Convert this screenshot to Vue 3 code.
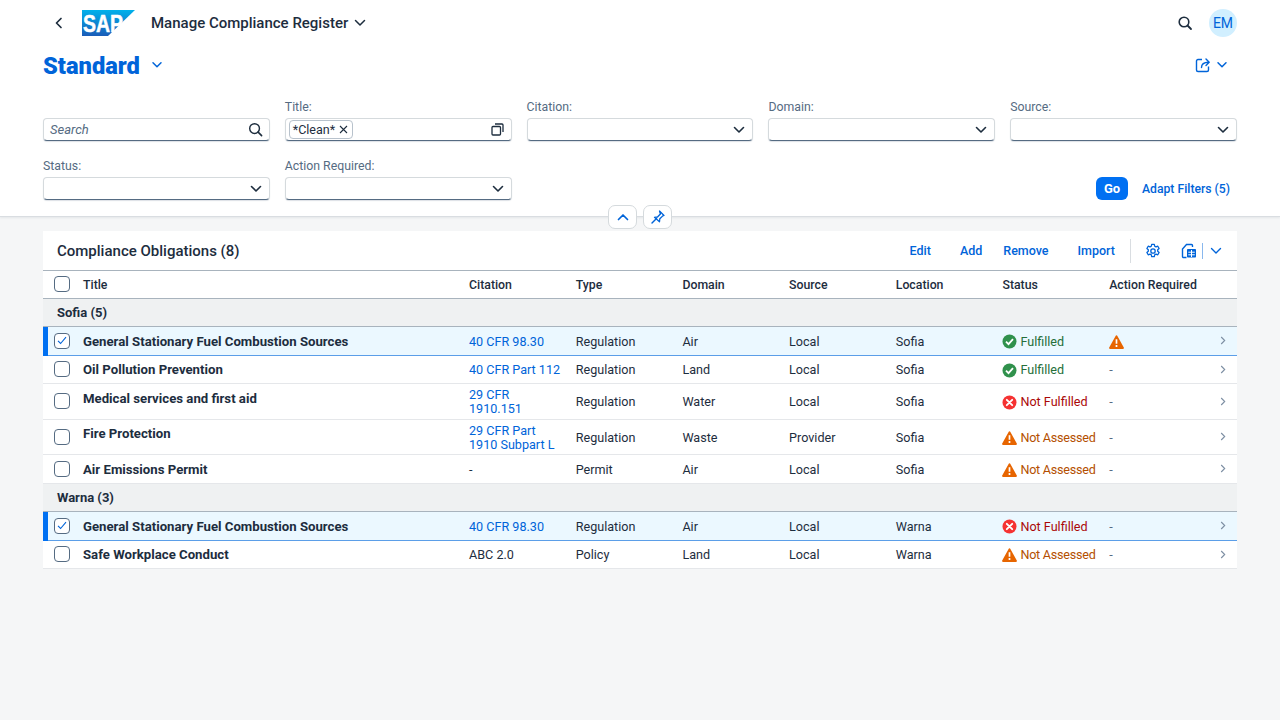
<script setup>
const filters1 = [
  { label: 'Citation:' },
  { label: 'Domain:' },
  { label: 'Source:' },
]
const filters2 = [{ label: 'Status:' }, { label: 'Action Required:' }]
const columns = ['Citation', 'Type', 'Domain', 'Source', 'Location', 'Status', 'Action Required']
const groups = [
  {
    name: 'Sofia (5)',
    rows: [
      { title: 'General Stationary Fuel Combustion Sources', citation: ['40 CFR 98.30'], link: true, type: 'Regulation', domain: 'Air', source: 'Local', location: 'Sofia', status: 'ok', action: 'warn', selected: true },
      { title: 'Oil Pollution Prevention', citation: ['40 CFR Part 112'], link: true, type: 'Regulation', domain: 'Land', source: 'Local', location: 'Sofia', status: 'ok', action: '-' },
      { title: 'Medical services and first aid', citation: ['29 CFR', '1910.151'], link: true, type: 'Regulation', domain: 'Water', source: 'Local', location: 'Sofia', status: 'bad', action: '-' },
      { title: 'Fire Protection', citation: ['29 CFR Part', '1910 Subpart L'], link: true, type: 'Regulation', domain: 'Waste', source: 'Provider', location: 'Sofia', status: 'warn', action: '-' },
      { title: 'Air Emissions Permit', citation: ['-'], type: 'Permit', domain: 'Air', source: 'Local', location: 'Sofia', status: 'warn', action: '-' },
    ],
  },
  {
    name: 'Warna (3)',
    rows: [
      { title: 'General Stationary Fuel Combustion Sources', citation: ['40 CFR 98.30'], link: true, type: 'Regulation', domain: 'Air', source: 'Local', location: 'Warna', status: 'bad', action: '-', selected: true },
      { title: 'Safe Workplace Conduct', citation: ['ABC 2.0'], type: 'Policy', domain: 'Land', source: 'Local', location: 'Warna', status: 'warn', action: '-' },
    ],
  },
]
const statusText = { ok: 'Fulfilled', bad: 'Not Fulfilled', warn: 'Not Assessed' }
</script>

<template>
  <div class="page">
    <header class="head">
      <div class="shell">
        <svg class="back" width="10" height="12" viewBox="0 0 10 12"><path d="M7 1.500 2.500 6 7 10.500" fill="none" stroke="#1d2d3e" stroke-width="1.700" stroke-linecap="round" stroke-linejoin="round"/></svg>
        <svg class="logo" width="53" height="26" viewBox="0 0 53 26">
          <defs><linearGradient id="sapg" x1="0" y1="0" x2="0" y2="1"><stop offset="0" stop-color="#00b1eb"/><stop offset="1" stop-color="#1a5cb8"/></linearGradient></defs>
          <polygon points="0,0 53,0 26,26 0,26" fill="url(#sapg)"/>
          <text x="1" y="22" class="logo-text" textLength="40" lengthAdjust="spacingAndGlyphs">SAP</text>
        </svg>
        <span class="app-title">Manage Compliance Register</span>
        <svg class="app-chev" width="12" height="8" viewBox="0 0 12 8"><path d="M1.500 1.500 6 6l4.500-4.500" fill="none" stroke="#1d2d3e" stroke-width="1.500" stroke-linecap="round" stroke-linejoin="round"/></svg>
        <span class="grow"></span>
        <svg width="16" height="16" viewBox="0 0 16 16"><circle cx="7" cy="7" r="4.800" fill="none" stroke="#1d2d3e" stroke-width="1.600"/><path d="m10.500 10.500 3.500 3.500" stroke="#1d2d3e" stroke-width="1.800" stroke-linecap="round"/></svg>
        <span class="avatar">EM</span>
      </div>
      <div class="variant">
        <h1>Standard</h1>
        <svg width="12" height="8" viewBox="0 0 12 8"><path d="M2 1.800 6 5.800l4-4" fill="none" stroke="#0064d9" stroke-width="1.500" stroke-linecap="round" stroke-linejoin="round"/></svg>
        <span class="grow"></span>
        <svg width="16" height="16" viewBox="0 0 16 16"><path d="M7 2.500H3a1.500 1.500 0 0 0-1.500 1.500v9A1.500 1.500 0 0 0 3 14.500h9a1.500 1.500 0 0 0 1.500-1.500V9.500" fill="none" stroke="#0064d9" stroke-width="1.400"/><path d="M6.500 10.500c0-3.500 2.500-5.300 7-5.300M11 2l3.200 3.200L11 8.400" fill="none" stroke="#0064d9" stroke-width="1.400" stroke-linecap="round" stroke-linejoin="round"/></svg>
        <svg class="share-chev" width="12" height="8" viewBox="0 0 12 8"><path d="M2 1.800 6 5.800l4-4" fill="none" stroke="#0064d9" stroke-width="1.500" stroke-linecap="round" stroke-linejoin="round"/></svg>
      </div>
      <div class="filters">
        <div class="field">
          <span class="label"></span>
          <div class="input">
            <span class="placeholder">Search</span>
            <svg width="15" height="15" viewBox="0 0 16 16"><circle cx="7" cy="7" r="5.200" fill="none" stroke="#1d2d3e" stroke-width="1.500"/><path d="m10.800 10.800 3.700 3.700" stroke="#1d2d3e" stroke-width="1.700" stroke-linecap="round"/></svg>
          </div>
        </div>
        <div class="field">
          <span class="label">Title:</span>
          <div class="input token-input">
            <span class="token">*Clean*
              <svg width="9" height="9" viewBox="0 0 9 9"><path d="m1 1 7 7M8 1 1 8" stroke="#1d2d3e" stroke-width="1.100"/></svg>
            </span>
            <svg width="13" height="13" viewBox="0 0 13 13"><rect x="1" y="3.500" width="8.500" height="8.500" rx="1" fill="none" stroke="#1d2d3e" stroke-width="1.300"/><path d="M4 1h7a1 1 0 0 1 1 1v7" fill="none" stroke="#1d2d3e" stroke-width="1.300"/></svg>
          </div>
        </div>
        <div v-for="f in filters1" :key="f.label" class="field">
          <span class="label">{{ f.label }}</span>
          <div class="input select">
            <svg width="12" height="8" viewBox="0 0 12 8"><path d="M1.500 1.500 6 6l4.500-4.500" fill="none" stroke="#1d2d3e" stroke-width="1.600" stroke-linecap="round" stroke-linejoin="round"/></svg>
          </div>
        </div>
        <div v-for="f in filters2" :key="f.label" class="field">
          <span class="label">{{ f.label }}</span>
          <div class="input select">
            <svg width="12" height="8" viewBox="0 0 12 8"><path d="M1.500 1.500 6 6l4.500-4.500" fill="none" stroke="#1d2d3e" stroke-width="1.600" stroke-linecap="round" stroke-linejoin="round"/></svg>
          </div>
        </div>
        <div class="actions">
          <button class="go">Go</button>
          <button class="adapt">Adapt Filters (5)</button>
        </div>
      </div>
      <div class="collapse">
        <button class="round"><svg width="12" height="8" viewBox="0 0 12 8"><path d="M1.500 6.500 6 2l4.500 4.500" fill="none" stroke="#0064d9" stroke-width="1.700" stroke-linecap="round" stroke-linejoin="round"/></svg></button>
        <button class="round"><svg width="14" height="14" viewBox="0 0 14 14"><path d="M8.500 1 13 5.500l-1.200.4-3 2.900-.3 3L3.500 7.300l3-.3 2.900-3z" fill="none" stroke="#0064d9" stroke-width="1.300" stroke-linejoin="round"/><path d="M5.500 8.500 1 13" stroke="#0064d9" stroke-width="1.400" stroke-linecap="round"/></svg></button>
      </div>
    </header>

    <main class="content">
      <section class="card">
        <div class="toolbar">
          <h2>Compliance Obligations (8)</h2>
          <span class="grow"></span>
          <button class="tb edit">Edit</button>
          <button class="tb add">Add</button>
          <button class="tb remove">Remove</button>
          <button class="tb import">Import</button>
          <span class="sep"></span>
          <svg class="gear" width="16" height="16" viewBox="0 0 16 16"><circle cx="8" cy="8" r="2.200" fill="none" stroke="#0064d9" stroke-width="1.300"/><path d="M6.700 1.300h2.600l.4 1.900 1.300.7 1.800-.7 1.300 2.300-1.400 1.300v1.400l1.400 1.300-1.300 2.300-1.800-.7-1.300.7-.4 1.900H6.700l-.4-1.900-1.300-.7-1.800.7-1.300-2.300 1.400-1.300V6.800L1.900 5.500l1.300-2.300 1.800.7 1.300-.7z" fill="none" stroke="#0064d9" stroke-width="1.300" stroke-linejoin="round"/></svg>
          <svg class="export" width="16" height="16" viewBox="0 0 16 16"><path d="M5.500 14.500h-3a1 1 0 0 1-1-1V6l4-4.500h5a1 1 0 0 1 1 1V4" fill="none" stroke="#0064d9" stroke-width="1.400"/><rect x="6" y="6" width="9" height="8.500" rx=".8" fill="#0064d9"/><path d="M7.300 9.200h6.500M7.300 11.800h6.500M10.500 7v7" stroke="#fff" stroke-width="1"/></svg>
          <span class="sep small"></span>
          <svg class="tb-chev" width="12" height="8" viewBox="0 0 12 8"><path d="M1.500 1.500 6 6l4.500-4.500" fill="none" stroke="#0064d9" stroke-width="1.400" stroke-linecap="round" stroke-linejoin="round"/></svg>
        </div>
        <div class="row head-row">
          <div class="check-cell"><span class="check"></span></div>
          <div class="cell th">Title</div>
          <div v-for="c in columns" :key="c" class="cell th">{{ c }}</div>
        </div>
        <template v-for="g in groups" :key="g.name">
          <div class="group">{{ g.name }}</div>
          <div v-for="(r, i) in g.rows" :key="i" class="row" :class="{ selected: r.selected }">
            <div class="check-cell">
              <span class="check">
                <svg v-if="r.selected" width="10" height="9" viewBox="0 0 10 9"><path d="M1 4.800 3.600 7.500 9 1.200" fill="none" stroke="#0064d9" stroke-width="1.100"/></svg>
              </span>
            </div>
            <div class="cell title">{{ r.title }}</div>
            <div class="cell" :class="{ link: r.link }">
              <div v-for="l in r.citation" :key="l">{{ l }}</div>
            </div>
            <div class="cell">{{ r.type }}</div>
            <div class="cell">{{ r.domain }}</div>
            <div class="cell">{{ r.source }}</div>
            <div class="cell">{{ r.location }}</div>
            <div class="cell status" :class="r.status">
              <svg v-if="r.status === 'ok'" width="15" height="15" viewBox="0 0 15 15"><circle cx="7.500" cy="7.500" r="7" fill="#30914c"/><path d="m4 7.700 2.500 2.500L11 5.200" fill="none" stroke="#fff" stroke-width="1.800"/></svg>
              <svg v-else-if="r.status === 'bad'" width="15" height="15" viewBox="0 0 15 15"><circle cx="7.500" cy="7.500" r="7" fill="#f53232"/><path d="m4.800 4.800 5.400 5.400m0-5.400-5.400 5.400" stroke="#fff" stroke-width="1.900" stroke-linecap="round"/></svg>
              <svg v-else width="15" height="14" viewBox="0 0 15 14"><path d="M6.600.9a1 1 0 0 1 1.800 0l6.400 11.500a1 1 0 0 1-.9 1.500H1.100a1 1 0 0 1-.9-1.500z" fill="#e76500"/><path d="M7.500 4.200v4.600M7.500 10.100v1.800" stroke="#fff" stroke-width="1.700"/></svg>
              <span>{{ statusText[r.status] }}</span>
            </div>
            <div class="cell action">
              <svg v-if="r.action === 'warn'" width="15" height="14" viewBox="0 0 15 14"><path d="M6.600.9a1 1 0 0 1 1.800 0l6.400 11.500a1 1 0 0 1-.9 1.500H1.100a1 1 0 0 1-.9-1.500z" fill="#e76500"/><path d="M7.500 4.200v4.600M7.500 10.100v1.800" stroke="#fff" stroke-width="1.700"/></svg>
              <span v-else>-</span>
            </div>
            <div class="nav">
              <svg width="6" height="9" viewBox="0 0 6 9"><path d="m1.200 1 3.500 3.500L1.200 8" fill="none" stroke="#7d8fa3" stroke-width="1.100"/></svg>
            </div>
          </div>
        </template>
      </section>
    </main>
  </div>
</template>

<style>
html, body { margin: 0; background: #f5f6f7; }
</style>

<style scoped>
.page { width: 1280px; height: 720px; overflow: hidden; background: #f5f6f7; font-family: Roboto, "Liberation Sans", sans-serif; font-size: 12.600px; color: #1d2d3e; }
button { font: inherit; border: 0; background: none; padding: 0; }
h1, h2 { margin: 0; }
.grow { flex: 1; }
.head { position: relative; height: 217px; box-sizing: border-box; background: #fff; border-bottom: 1px solid #d9dde1; box-shadow: 0 1px 2px rgba(29,45,62,.08); }
.shell { display: flex; align-items: center; height: 46px; padding: 0 43px 0 54px; }
.back { margin-right: 18px; }
.logo { flex-shrink: 0; }
.logo-text { font: 700 23px "Liberation Sans", sans-serif; fill: #fff; stroke: #fff; stroke-width: .5px; }
.app-title { margin-left: 16px; font-size: 15px; font-weight: 500; }
.app-chev { margin-left: 6px; }
.avatar { display: flex; align-items: center; justify-content: center; width: 28px; height: 28px; margin-left: 16px; border-radius: 50%; background: #d1efff; color: #0064d9; font-size: 14px; }
.variant { display: flex; align-items: center; height: 38px; padding: 0 52px 0 43px; }
.variant h1 { font-size: 23.700px; line-height: 35px; padding-top: 3px; font-weight: 900; color: #0064d9; margin-right: 11px; }
.share-chev { margin-left: 5px; }
.filters { display: grid; grid-template-columns: repeat(5, 1fr); column-gap: 15px; row-gap: 17px; padding: 15px 43px 0; }
.field { display: flex; flex-direction: column; }
.label { height: 16px; line-height: 16px; margin-bottom: 3px; font-size: 12.300px; color: #556b82; }
.input { display: flex; align-items: center; justify-content: space-between; height: 23px; box-sizing: border-box; padding: 0 6px; background: #fff; border: 1px solid #d5dadd; border-bottom-color: #556b82; border-radius: 4px; box-shadow: 0 1px 1px rgba(85,107,130,.2); }
.placeholder { font-style: italic; font-size: 13px; color: #556b82; }
.select { justify-content: flex-end; padding-right: 7px; }
.token-input { padding: 0 7px 0 3px; }
.token { display: inline-flex; align-items: center; gap: 4px; height: 17px; padding: 0 4px 0 3px; background: #fff; border: 1px solid #b8c2cc; border-radius: 4px; font-size: 12.500px; }
.actions { grid-column: 3 / 6; display: flex; align-items: flex-end; justify-content: flex-end; padding-right: 7px; }
.go { width: 32px; height: 23px; margin-right: 14px; background: #0070f2; color: #fff; border-radius: 6px; font-size: 13px; font-weight: 700; }
.adapt { color: #0064d9; height: 23px; font-size: 12.200px; font-weight: 500; }
.collapse { position: absolute; left: 608px; top: 205px; display: flex; gap: 6px; }
.round { display: flex; align-items: center; justify-content: center; width: 29px; height: 24px; box-sizing: border-box; background: #fff; border: 1px solid #d5dadd; border-radius: 7px; }
.content { padding: 14px 43px 0; }
.card { background: #fff; }
.toolbar { display: flex; align-items: center; height: 39px; padding: 0 15px 0 14px; }
.toolbar h2 { font-size: 15px; font-weight: 500; }
.tb { color: #0064d9; font-size: 12.500px; font-weight: 500; }
.add { margin-left: 29px; }
.remove { margin-left: 21px; }
.import { margin-left: 29px; }
.sep { width: 1px; height: 24px; margin: 0 14px 0 15px; background: #d9dde1; }
.sep.small { height: 16px; margin: 0 7px 0 5px; background: #89b8ee; }
.export { margin-left: 20px; }
.row { display: grid; grid-template-columns: 32px 386px repeat(7, 106.7px) 1fr; align-items: center; min-height: 28.500px; box-sizing: border-box; border-bottom: 1px solid #e5e7ea; }
.head-row { border-top: 1px solid #a8b3bd; border-bottom: 1px solid #a8b3bd; min-height: 28.500px; }
.check-cell { display: flex; justify-content: center; padding-left: 6px; }
.check { display: flex; align-items: center; justify-content: center; width: 14px; height: 14px; box-sizing: content-box; background: #fff; border: 1px solid #556b82; border-radius: 4px; }
.cell { padding: 4px 8px 2.500px; line-height: 14px; white-space: nowrap; }
.th { font-size: 12.300px; font-weight: 500; }
.title { font-size: 13.200px; font-weight: 700; align-self: start; padding-top: 7.500px; }
.link { color: #0064d9; }
.group { display: flex; align-items: center; height: 28.500px; box-sizing: border-box; padding-left: 14px; padding-top: 1px; background: #eff1f2; border-bottom: 1px solid #a8b3bd; font-size: 13px; font-weight: 700; }
.selected { position: relative; background: #ebf8ff; border-bottom: 1px solid #5b9ee8; }
.selected::before { content: ""; position: absolute; left: 0; top: 0; bottom: -1px; width: 5px; background: #0070f2; }
.status { display: flex; align-items: center; gap: 3px; }
.status svg { flex-shrink: 0; }
.status.ok { color: #256f3a; }
.status.bad { color: #aa0808; }
.status.warn { color: #b44f00; letter-spacing: -.25px; }
.action { display: flex; align-items: center; color: #556b82; }
.nav { display: flex; justify-content: flex-end; padding-right: 11px; }
</style>
